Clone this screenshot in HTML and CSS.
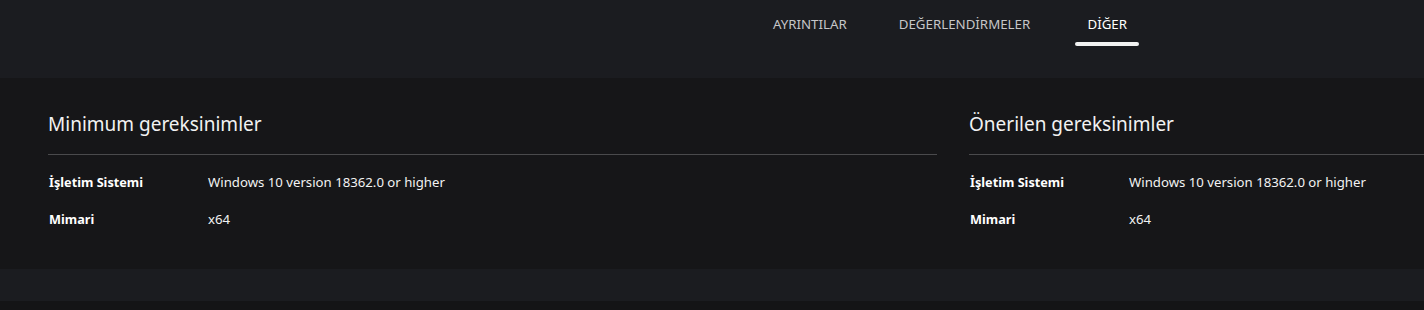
FILE: index.html
```html
<!DOCTYPE html>
<html lang="tr">
<head>
<meta charset="utf-8">
<link rel="stylesheet" href="styles.css">
</head>
<body>
<header class="topbar">
  <nav class="tabs">
    <a class="tab">AYRINTILAR</a>
    <a class="tab">DEĞERLENDİRMELER</a>
    <a class="tab active">DİĞER</a>
  </nav>
</header>
<section class="panel">
  <div class="col">
    <h2 class="col-title">Minimum gereksinimler</h2>
    <dl class="req">
      <dt>İşletim Sistemi</dt><dd>Windows 10 version 18362.0 or higher</dd>
      <dt>Mimari</dt><dd>x64</dd>
    </dl>
  </div>
  <div class="col">
    <h2 class="col-title">Önerilen gereksinimler</h2>
    <dl class="req">
      <dt>İşletim Sistemi</dt><dd>Windows 10 version 18362.0 or higher</dd>
      <dt>Mimari</dt><dd>x64</dd>
    </dl>
  </div>
</section>
<div class="band"></div>
<div class="foot"></div>
</body>
</html>
```
FILE: styles.css
```css
html, body {
  margin: 0;
  padding: 0;
  background: #141416;
  font-family: "Noto Sans", "Open Sans", sans-serif;
  overflow: hidden;
}
.topbar {
  height: 78px;
  background: #1b1c20;
  display: flex;
}
.tabs {
  display: flex;
  gap: 26px;
  margin-left: 760px;
  height: 100%;
}
.tab {
  font-size: 13.3px;
  color: #c6c6c8;
  padding: 15px 13px 0;
  line-height: 18px;
  text-decoration: none;
}
.tab.active {
  color: #ffffff;
  padding-left: 0;
  padding-right: 0;
  margin-left: 6px;
  width: 64px;
  display: flex;
  flex-direction: column;
  align-items: center;
}
.tab.active::after {
  content: "";
  display: block;
  width: 64px;
  height: 4px;
  border-radius: 2px;
  background: #f2f2f2;
  margin-top: 9px;
}
.panel {
  height: 191px;
  background: #161618;
  display: grid;
  grid-template-columns: 889px 889px;
  column-gap: 32px;
  padding-left: 48px;
  box-sizing: border-box;
}
.col-title {
  margin: 0;
  padding-top: 33px;
  height: 77px;
  box-sizing: border-box;
  border-bottom: 1px solid #4a4a4c;
  font-size: 19px;
  font-weight: 400;
  color: #f2f2f2;
  line-height: 26px;
}
.req {
  margin: 0;
  padding-top: 16px;
  display: grid;
  grid-template-columns: 160px 1fr;
  row-gap: 15px;
  font-size: 13.2px;
  line-height: 22px;
}
.req dt {
  font-weight: 700;
  color: #ffffff;
  font-size: 12.7px;
  padding-left: 1px;
}
.req dd {
  margin: 0;
  color: #f2f2f2;
}
.band {
  height: 32px;
  background: #1b1c20;
}
.foot {
  height: 9px;
  background: #141416;
}
```
